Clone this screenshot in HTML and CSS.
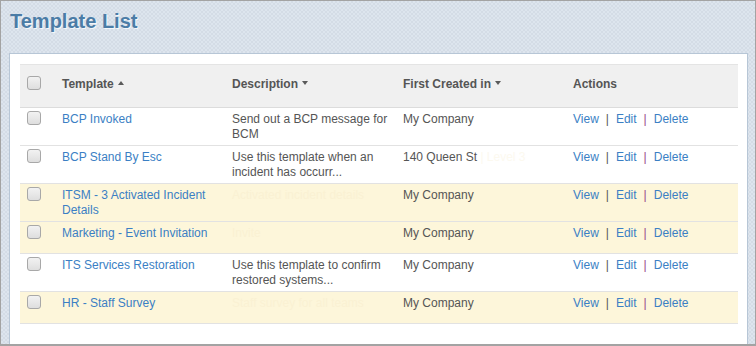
FILE: index.html
```html
<!DOCTYPE html>
<html lang="en">
<head>
    <meta charset="UTF-8">
    <meta name="viewport" content="width=device-width, initial-scale=1.0">
    <title>Template List</title>
    <link rel="stylesheet" href="styles.css">
</head>
<body>
    <div class="page">
        <h1 class="title">Template List</h1>

        <div class="panel">
            <table class="list">
                <colgroup>
                    <col class="c-check">
                    <col class="c-name">
                    <col class="c-desc">
                    <col class="c-created">
                    <col class="c-actions">
                </colgroup>
                <thead>
                    <tr>
                        <th><span class="check"></span></th>
                        <th>Template<span class="sort up"></span></th>
                        <th>Description<span class="sort down"></span></th>
                        <th>First Created in<span class="sort down"></span></th>
                        <th>Actions</th>
                    </tr>
                </thead>
                <tbody>
                    <tr>
                        <td><span class="check"></span></td>
                        <td><a href="#">BCP Invoked</a></td>
                        <td>Send out a BCP message for BCM</td>
                        <td>My Company</td>
                        <td class="actions"><a href="#">View</a><span class="sep">|</span><a href="#">Edit</a><span class="sep alt">|</span><a href="#">Delete</a></td>
                    </tr>
                    <tr>
                        <td><span class="check"></span></td>
                        <td><a href="#">BCP Stand By Esc</a></td>
                        <td>Use this template when an incident has occurr...</td>
                        <td>140 Queen St<span class="ghost"> | Level 3</span></td>
                        <td class="actions"><a href="#">View</a><span class="sep">|</span><a href="#">Edit</a><span class="sep alt">|</span><a href="#">Delete</a></td>
                    </tr>
                    <tr class="hl">
                        <td><span class="check"></span></td>
                        <td><a href="#">ITSM - 3 Activated Incident Details</a></td>
                        <td><span class="ghost">Activated incident details</span></td>
                        <td>My Company</td>
                        <td class="actions"><a href="#">View</a><span class="sep">|</span><a href="#">Edit</a><span class="sep alt">|</span><a href="#">Delete</a></td>
                    </tr>
                    <tr class="hl">
                        <td><span class="check"></span></td>
                        <td><a href="#">Marketing - Event Invitation</a></td>
                        <td><span class="ghost">Invite</span></td>
                        <td>My Company</td>
                        <td class="actions"><a href="#">View</a><span class="sep">|</span><a href="#">Edit</a><span class="sep alt">|</span><a href="#">Delete</a></td>
                    </tr>
                    <tr>
                        <td><span class="check"></span></td>
                        <td><a href="#">ITS Services Restoration</a></td>
                        <td>Use this template to confirm restored systems...</td>
                        <td>My Company</td>
                        <td class="actions"><a href="#">View</a><span class="sep">|</span><a href="#">Edit</a><span class="sep alt">|</span><a href="#">Delete</a></td>
                    </tr>
                    <tr class="hl">
                        <td><span class="check"></span></td>
                        <td><a href="#">HR - Staff Survey</a></td>
                        <td><span class="ghost">Staff survey for all teams</span></td>
                        <td>My Company</td>
                        <td class="actions"><a href="#">View</a><span class="sep">|</span><a href="#">Edit</a><span class="sep alt">|</span><a href="#">Delete</a></td>
                    </tr>
                </tbody>
            </table>
        </div>
    </div>
</body>
</html>
```

FILE: styles.css
```css
body {
    margin: 0;
    font-family: "Liberation Sans", Arial, sans-serif;
    font-size: 12px;
    color: #555;
}
.page {
    height: 346px;
    box-sizing: border-box;
    border: 1px solid #a3a3a3;
    border-bottom-width: 2px;
    padding: 0 7px 0 8px;
    background-color: #d9e1ea;
    background-image: repeating-conic-gradient(#d4dce6 0 25%, #dde5ee 0 50%);
    background-size: 4px 4px;
    display: flex;
    flex-direction: column;
    overflow: hidden;
}
.title {
    margin: 0;
    height: 52px;
    box-sizing: border-box;
    padding: 8px 0 0 1px;
    font-size: 20px;
    line-height: 24px;
    font-weight: bold;
    color: #4b7ca6;
    text-shadow: 1px 1px 0 #f4f7fa;
}
.panel {
    flex: 1;
    background: #fff;
    border: 1px solid #b7c6d6;
    border-bottom: none;
    padding: 10px 9px 0 10px;
}
.list {
    width: 718px;
    table-layout: fixed;
    border-collapse: separate;
    border-spacing: 0;
}
.c-check { width: 35px; }
.c-name { width: 170px; }
.c-desc { width: 171px; }
.c-created { width: 170px; }
.c-actions { width: 172px; }

th, td {
    text-align: left;
    vertical-align: top;
    line-height: 15px;
    padding: 4px 7px 3px;
    border-bottom: 1px solid #e2e2e2;
}
td:first-child {
    padding-top: 3px;
}
th {
    font-weight: bold;
    color: #555;
    background: #f0f0f0;
    border-top: 1px solid #e4e4e4;
    border-bottom-color: #dcdcdc;
    padding: 12px 7px 15px;
}
th:first-child {
    padding-top: 11px;
}
tbody tr {
    height: 32px;
}
tr.hl td {
    background: #fdf6da;
}
a {
    color: #3b7fc4;
    text-decoration: none;
}
.check {
    display: block;
    width: 12px;
    height: 12px;
    border: 1px solid #a8a8a8;
    border-radius: 3px;
    background: linear-gradient(#f2f2f2, #dedede);
}
th .check {
    margin-bottom: 1px;
}
.sort {
    display: inline-block;
    vertical-align: top;
    margin: 4px 0 0 4px;
    width: 0;
    height: 0;
    border-left: 3.5px solid transparent;
    border-right: 3.5px solid transparent;
}
.sort.up {
    border-bottom: 4px solid #5a5a5a;
}
.sort.down {
    border-top: 4px solid #5a5a5a;
}
.sep {
    margin: 0 7px;
    color: #555;
}
.sep.alt {
    color: #9a4a8a;
}
tr.hl .ghost {
    color: #faf1d3;
}
tbody tr:not(.hl) .ghost {
    color: #fcf9ef;
}
```
